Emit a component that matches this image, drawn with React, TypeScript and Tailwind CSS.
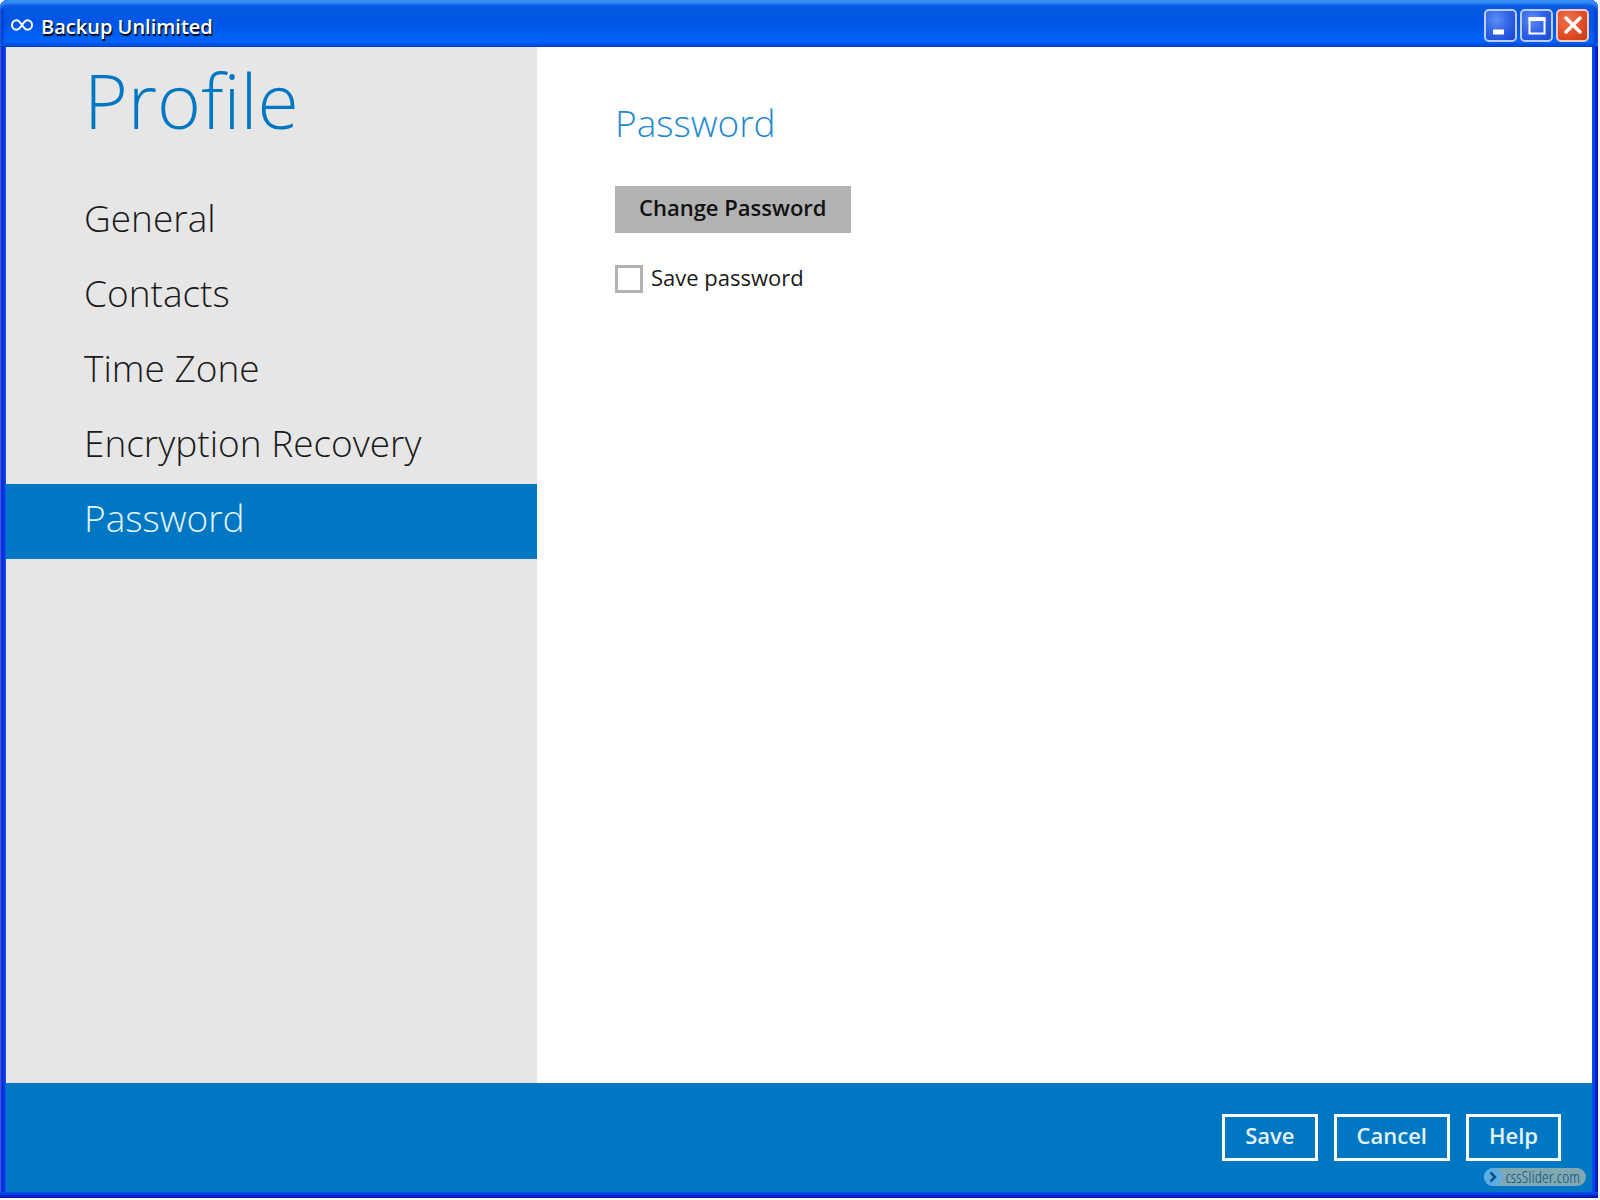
import { useState } from "react";
import type { ReactNode } from "react";

const navItems = [
  "General",
  "Contacts",
  "Time Zone",
  "Encryption Recovery",
  "Password",
];

const footerActions = ["Save", "Cancel", "Help"];

function WindowButton({
  label,
  danger = false,
  children,
}: {
  label: string;
  danger?: boolean;
  children: ReactNode;
}) {
  return (
    <button
      type="button"
      aria-label={label}
      className={`flex size-[33px] items-center justify-center rounded-[5px] border-2 ${
        danger
          ? "border-[#f3c9c4] bg-radial-[at_35%_30%] from-[#ec7450] via-[#e4502a] to-[#c63a12]"
          : "border-[#bccdf8] bg-radial-[at_35%_30%] from-[#5f8df5] via-[#2f62e6] to-[#1746cf]"
      }`}
    >
      <svg viewBox="0 0 28 28" className="size-7 shrink-0" fill="none" stroke="white">
        {children}
      </svg>
    </button>
  );
}

function TitleBar() {
  return (
    <header className="flex h-[47px] shrink-0 items-center justify-between rounded-t-lg border-b border-[#0340c4] bg-linear-to-b from-[#0a5be0] via-[#0055e6] to-[#0068ff] pr-[9px] pl-[11px] shadow-[inset_0_4px_3px_#3a90f5,inset_0_-3px_2px_#0050dd,inset_3px_0_3px_#0831c8,inset_-3px_0_3px_#0831c8]">
      <div className="flex items-center gap-2 pt-1">
        <svg viewBox="0 0 22 12" className="h-3 w-[22px]" fill="none" stroke="white" strokeWidth="2">
          <path d="M11 6C9 3 7.600 1.200 5.500 1.200a4.500 4.800 0 0 0 0 9.600C7.600 10.800 9 9 11 6s3.400-4.800 5.500-4.800a4.500 4.800 0 0 1 0 9.600C14.400 10.800 13 9 11 6Z" />
        </svg>
        <h1 className="pt-1 text-xl font-semibold text-white [text-shadow:1px_2px_1px_#000]">
          Backup Unlimited
        </h1>
      </div>
      <div className="flex gap-[3px] pt-1">
        <WindowButton label="Minimize">
          <path d="M6 21h11" strokeWidth="5" />
        </WindowButton>
        <WindowButton label="Maximize">
          <path d="M6.500 7v15.500h15V7" strokeWidth="2" />
          <path d="M5.500 8h17" strokeWidth="4" />
        </WindowButton>
        <WindowButton label="Close" danger>
          <path d="M7 7l14 14M21 7L7 21" strokeWidth="3.500" strokeLinecap="round" />
        </WindowButton>
      </div>
    </header>
  );
}

function Sidebar() {
  return (
    <aside className="w-[531px] bg-[#e6e6e6]">
      <h2 className="px-[78px] pb-[30px] text-[75px] leading-[107px] font-light text-[#0077c2]">
        Profile
      </h2>
      <nav>
        {navItems.map((item) => (
          <a
            key={item}
            href="#"
            aria-current={item === "Password" ? "page" : undefined}
            className={`block px-[78px] pb-[7px] text-[37px] leading-[68px] font-light ${
              item === "Password" ? "bg-[#0077c2] text-[#e3f3fd]" : "text-[#1a1a1a]"
            }`}
          >
            {item}
          </a>
        ))}
      </nav>
    </aside>
  );
}

function PasswordPanel() {
  const [savePassword, setSavePassword] = useState(false);

  return (
    <main className="flex flex-1 flex-col items-start bg-white px-[78px] pt-12">
      <h3 className="text-[37px] leading-[56px] font-light text-[#1c8ad2]">
        Password
      </h3>
      <button
        type="button"
        className="mt-[35px] h-[47px] bg-[#b2b2b2] px-6 pb-1 text-[22px] font-semibold text-[#111]"
      >
        Change Password
      </button>
      <label className="mt-8 flex items-center gap-2 text-[22px] leading-7 text-[#1a1a1a]">
        <input
          type="checkbox"
          checked={savePassword}
          onChange={(e) => setSavePassword(e.target.checked)}
          className="size-7 appearance-none border-3 border-[#b2b2b2] bg-white checked:bg-[#0077c2]"
        />
        <span className="pb-1 leading-6">Save password</span>
      </label>
    </main>
  );
}

function Footer() {
  return (
    <footer className="flex h-[109px] shrink-0 flex-col items-end justify-between bg-[#0077c2] pt-[31px]">
      <div className="flex gap-4 pr-[31px]">
        {footerActions.map((action) => (
          <button
            key={action}
            type="button"
            className="h-[47px] border-3 border-white px-5 pb-1 text-[22px] font-semibold text-[#e3f3fd]"
          >
            {action}
          </button>
        ))}
      </div>
      <a
        href="#"
        className="mr-1.5 mb-1.5 flex h-[18px] items-center gap-1 rounded-full bg-[#7fa8b0] pr-1.5 font-['Open_Sans_Condensed_Light','Liberation_Sans_Narrow','Open_Sans_Condensed',sans-serif] text-[17px] font-light text-[#0f4f80]"
      >
        <svg viewBox="0 0 18 18" className="size-[18px]">
          <circle cx="9" cy="9" r="9" fill="#5aaee8" />
          <path d="M6.500 4.500L11 9l-4.500 4.500" fill="none" stroke="#15507f" strokeWidth="2.500" />
        </svg>
        cssSlider.com
      </a>
    </footer>
  );
}

export default function App() {
  return (
    <div className="min-h-screen bg-[#f4f5ff] pr-[2px] pb-[2px] font-['Open_Sans',sans-serif]">
      <div className="flex min-h-[calc(100vh-2px)] flex-col rounded-t-lg bg-[#0a3fe8]">
        <TitleBar />
        <div className="flex flex-1 flex-col bg-[linear-gradient(to_right,#4a6af0_0px,#0a20d0_2px,#0a55f0_6px,#0a55f0_calc(100%-6px),#0838e8_calc(100%-3px),#00109a_100%)] px-[6px]">
          <div className="flex flex-1">
            <Sidebar />
            <PasswordPanel />
          </div>
          <Footer />
        </div>
        <div className="h-[6px] bg-linear-to-b from-[#0a50f0] via-[#0530dc] to-[#00109a]" />
      </div>
    </div>
  );
}
